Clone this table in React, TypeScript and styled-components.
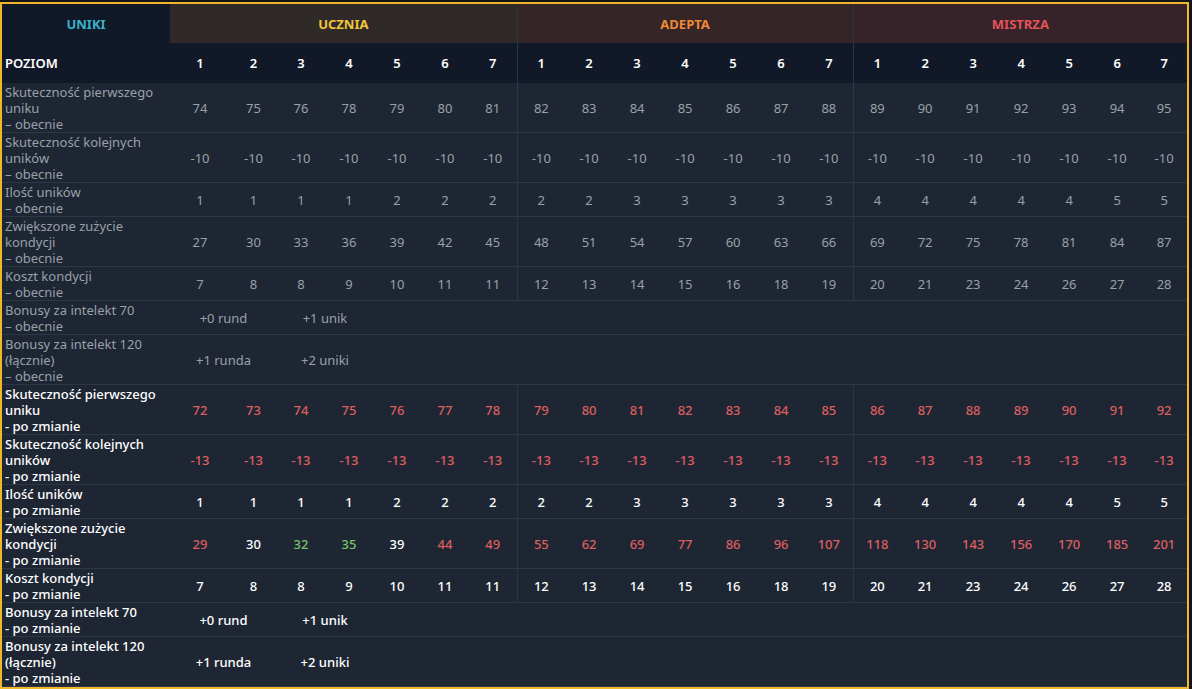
import React from "react";
import styled, { createGlobalStyle, css } from "styled-components";

const GlobalStyle = createGlobalStyle`
  html, body { margin: 0; padding: 0; background: #12141a; }
  body { font-family: "Noto Sans", "Open Sans", "Liberation Sans", sans-serif; }
  #root { padding-top: 2px; }
`;

const Frame = styled.div`
  width: 1185px;
  border: 2px solid #f0b828;
  background: #1e2634;
`;

const Table = styled.table`
  width: 1185px;
  border-collapse: collapse;
  table-layout: fixed;
  font-size: 13px;
`;

type Tier = "uniki" | "ucznia" | "adepta" | "mistrza";

const tierBg: Record<Tier, string> = {
  uniki: "#111827",
  ucznia: "#2f2a27",
  adepta: "#362527",
  mistrza: "#38222a",
};
const tierColor: Record<Tier, string> = {
  uniki: "#3ab5c8",
  ucznia: "#f0c43e",
  adepta: "#ec8a38",
  mistrza: "#e05458",
};

const TierHead = styled.th<{ $tier: Tier; $sep?: boolean }>`
  height: 39px;
  padding: 0;
  background: ${(p) => tierBg[p.$tier]};
  color: ${(p) => tierColor[p.$tier]};
  font-weight: 700;
  font-size: 13px;
  text-transform: uppercase;
  text-align: center;
  ${(p) => p.$sep && css`border-left: 1px solid #2c3545;`}
`;

const LevelRow = styled.tr`
  background: #111827;
`;

const LevelLabel = styled.th`
  height: 40px;
  padding: 0 0 0 3px;
  text-align: left;
  color: #ffffff;
  font-weight: 600;
  font-size: 13px;
`;

const LevelCell = styled.th<{ $sep?: boolean }>`
  padding: 0;
  text-align: center;
  color: #ffffff;
  font-weight: 600;
  font-size: 13px;
  ${(p) => p.$sep && css`border-left: 1px solid #2c3545;`}
`;

const DataRow = styled.tr`
  background: #1e2634;
  border-bottom: 1px solid #2c3646;
`;

const Label = styled.td<{ $after?: boolean }>`
  padding: 1px 2px 0 3px;
  line-height: 16px;
  vertical-align: middle;
  color: ${(p) => (p.$after ? "#ffffff" : "#9aa0a8")};
  font-weight: ${(p) => (p.$after ? 500 : 400)};
`;

type Tone = "gray" | "white" | "red" | "green";
const toneColor: Record<Tone, string> = {
  gray: "#9aa0a8",
  white: "#ffffff",
  red: "#dc5e5f",
  green: "#78c46a",
};

const Value = styled.td<{ $tone: Tone; $sep?: boolean }>`
  padding: 0;
  text-align: center;
  vertical-align: middle;
  color: ${(p) => toneColor[p.$tone]};
  font-weight: ${(p) => (p.$tone === "gray" ? 400 : 500)};
  ${(p) => p.$sep && css`border-left: 1px solid #2c3646;`}
`;

const colWidths = [
  168,
  60, 47, 48, 48, 48, 48, 48,
  48, 48, 48, 48, 48, 48, 48,
  48, 48, 48, 48, 48, 48, 46,
];

const range = (a: number, b: number) =>
  Array.from({ length: b - a + 1 }, (_, i) => a + i);

type NumRow = {
  lines: string[];
  after: boolean;
  values: (string | number)[];
  tones?: Tone[];
};

type BonusRow = {
  lines: string[];
  after: boolean;
  bonus: [string, string];
};

const obecnie = "– obecnie";
const poZmianie = "- po zmianie";

const ilosc = [1, 1, 1, 1, 2, 2, 2, 2, 2, 3, 3, 3, 3, 3, 4, 4, 4, 4, 4, 5, 5];
const koszt = [7, 8, 8, 9, 10, 11, 11, 12, 13, 14, 15, 16, 18, 19, 20, 21, 23, 24, 26, 27, 28];
const zuzycieAfter = [29, 30, 32, 35, 39, 44, 49, 55, 62, 69, 77, 86, 96, 107, 118, 130, 143, 156, 170, 185, 201];
const zuzycieTones: Tone[] = zuzycieAfter.map((_, i) =>
  i === 1 || i === 4 ? "white" : i === 2 || i === 3 ? "green" : "red"
);

const rows: (NumRow | BonusRow)[] = [
  {
    lines: ["Skuteczność pierwszego", "uniku", obecnie],
    after: false,
    values: [74, 75, 76, 78, 79, 80, 81, ...range(82, 95)],
  },
  {
    lines: ["Skuteczność kolejnych", "uników", obecnie],
    after: false,
    values: Array(21).fill("-10"),
  },
  { lines: ["Ilość uników", obecnie], after: false, values: ilosc },
  {
    lines: ["Zwiększone zużycie", "kondycji", obecnie],
    after: false,
    values: range(0, 20).map((i) => 27 + i * 3),
  },
  { lines: ["Koszt kondycji", obecnie], after: false, values: koszt },
  { lines: ["Bonusy za intelekt 70", obecnie], after: false, bonus: ["+0 rund", "+1 unik"] },
  {
    lines: ["Bonusy za intelekt 120", "(łącznie)", obecnie],
    after: false,
    bonus: ["+1 runda", "+2 uniki"],
  },
  {
    lines: ["Skuteczność pierwszego", "uniku", poZmianie],
    after: true,
    values: range(72, 92),
    tones: Array(21).fill("red"),
  },
  {
    lines: ["Skuteczność kolejnych", "uników", poZmianie],
    after: true,
    values: Array(21).fill("-13"),
    tones: Array(21).fill("red"),
  },
  { lines: ["Ilość uników", poZmianie], after: true, values: ilosc },
  {
    lines: ["Zwiększone zużycie", "kondycji", poZmianie],
    after: true,
    values: zuzycieAfter,
    tones: zuzycieTones,
  },
  { lines: ["Koszt kondycji", poZmianie], after: true, values: koszt },
  { lines: ["Bonusy za intelekt 70", poZmianie], after: true, bonus: ["+0 rund", "+1 unik"] },
  {
    lines: ["Bonusy za intelekt 120", "(łącznie)", poZmianie],
    after: true,
    bonus: ["+1 runda", "+2 uniki"],
  },
];

const isSep = (i: number) => i === 7 || i === 14;

export default function App() {
  return (
    <>
      <GlobalStyle />
      <Frame>
        <Table>
          <colgroup>
            {colWidths.map((w, i) => (
              <col key={i} style={{ width: w }} />
            ))}
          </colgroup>
          <thead>
            <tr>
              <TierHead $tier="uniki">Uniki</TierHead>
              <TierHead $tier="ucznia" colSpan={7}>Ucznia</TierHead>
              <TierHead $tier="adepta" colSpan={7} $sep>Adepta</TierHead>
              <TierHead $tier="mistrza" colSpan={7} $sep>Mistrza</TierHead>
            </tr>
            <LevelRow>
              <LevelLabel>POZIOM</LevelLabel>
              {range(0, 20).map((i) => (
                <LevelCell key={i} $sep={isSep(i)}>
                  {(i % 7) + 1}
                </LevelCell>
              ))}
            </LevelRow>
          </thead>
          <tbody>
            {rows.map((row, r) => {
              const base: Tone = row.after ? "white" : "gray";
              return (
                <DataRow key={r}>
                  <Label $after={row.after}>
                    {row.lines.map((l, k) => (
                      <React.Fragment key={k}>
                        {k > 0 && <br />}
                        {l}
                      </React.Fragment>
                    ))}
                  </Label>
                  {"bonus" in row ? (
                    <>
                      <Value $tone={base} colSpan={2}>{row.bonus[0]}</Value>
                      <Value $tone={base} colSpan={2}>{row.bonus[1]}</Value>
                      <Value $tone={base} colSpan={17} />
                    </>
                  ) : (
                    row.values.map((v, i) => (
                      <Value
                        key={i}
                        $tone={row.tones ? row.tones[i] : base}
                        $sep={isSep(i)}
                      >
                        {v}
                      </Value>
                    ))
                  )}
                </DataRow>
              );
            })}
          </tbody>
        </Table>
      </Frame>
    </>
  );
}
